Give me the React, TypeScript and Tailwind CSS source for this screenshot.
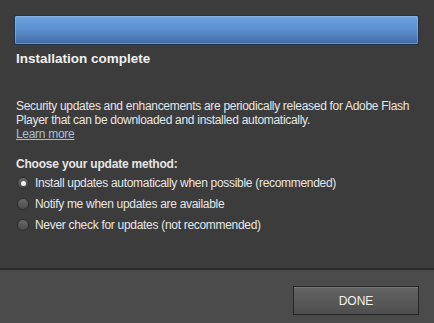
export default function App() {
  const options = [
    { label: "Install updates automatically when possible (recommended)", checked: true },
    { label: "Notify me when updates are available", checked: false },
    { label: "Never check for updates (not recommended)", checked: false },
  ];
  return (
    <div
      className="w-[434px] h-[323px] flex flex-col bg-[#3c3c3c] text-[#e6e6e6] overflow-hidden"
      style={{ fontFamily: '"Liberation Sans", Arial, sans-serif' }}
    >
      <div className="flex-1 flex flex-col pl-[14px] pr-[15px] pt-[15px]">
        <div className="h-[30px] rounded-[2px] border border-[#22324a] bg-gradient-to-b from-[#6ea4e0] via-[#5b8fcf] to-[#3f6aa3] shadow-[inset_0_0_0_1px_rgba(150,190,235,0.5)]" />
        <div className="pl-[2px] mt-[6px] text-[13.5px] font-bold leading-[16px] text-[#f0f0f0]">
          Installation complete
        </div>
        <div className="pl-[2px] mt-[32px] text-[12px] leading-[14px] tracking-[-0.3px]">
          <div>Security updates and enhancements are periodically released for Adobe Flash</div>
          <div>Player that can be downloaded and installed automatically.</div>
          <div>
            <span className="underline text-[#a7bfd4]">Learn more</span>
          </div>
        </div>
        <div className="pl-[2px] mt-[16px] text-[12px] font-bold leading-[14px] tracking-[-0.2px]">
          Choose your update method:
        </div>
        <div className="pl-[3px] mt-[5px] flex flex-col gap-[7px] text-[12px] leading-[14px] tracking-[-0.3px]">
          {options.map((o) => (
            <div key={o.label} className="flex items-center gap-[6px]">
              <span className="w-[12px] h-[12px] rounded-full border border-[#2e2e2e] bg-gradient-to-b from-[#6a6a6a] to-[#4a4a4a] flex items-center justify-center">
                {o.checked && <span className="w-[5px] h-[5px] rounded-full bg-[#f2f2f2]" />}
              </span>
              <span>{o.label}</span>
            </div>
          ))}
        </div>
      </div>
      <div className="h-[55px] border-t-2 border-[#2b2b2b] bg-[#4b4b4b] flex items-start justify-end pr-[15px] pt-[16px]">
        <button className="w-[126px] h-[29px] border border-[#262626] bg-gradient-to-b from-[#646464] to-[#4e4e4e] shadow-[inset_0_1px_0_rgba(255,255,255,0.12)] text-[12px] text-[#f2f2f2] flex items-center justify-center">
          DONE
        </button>
      </div>
    </div>
  );
}
